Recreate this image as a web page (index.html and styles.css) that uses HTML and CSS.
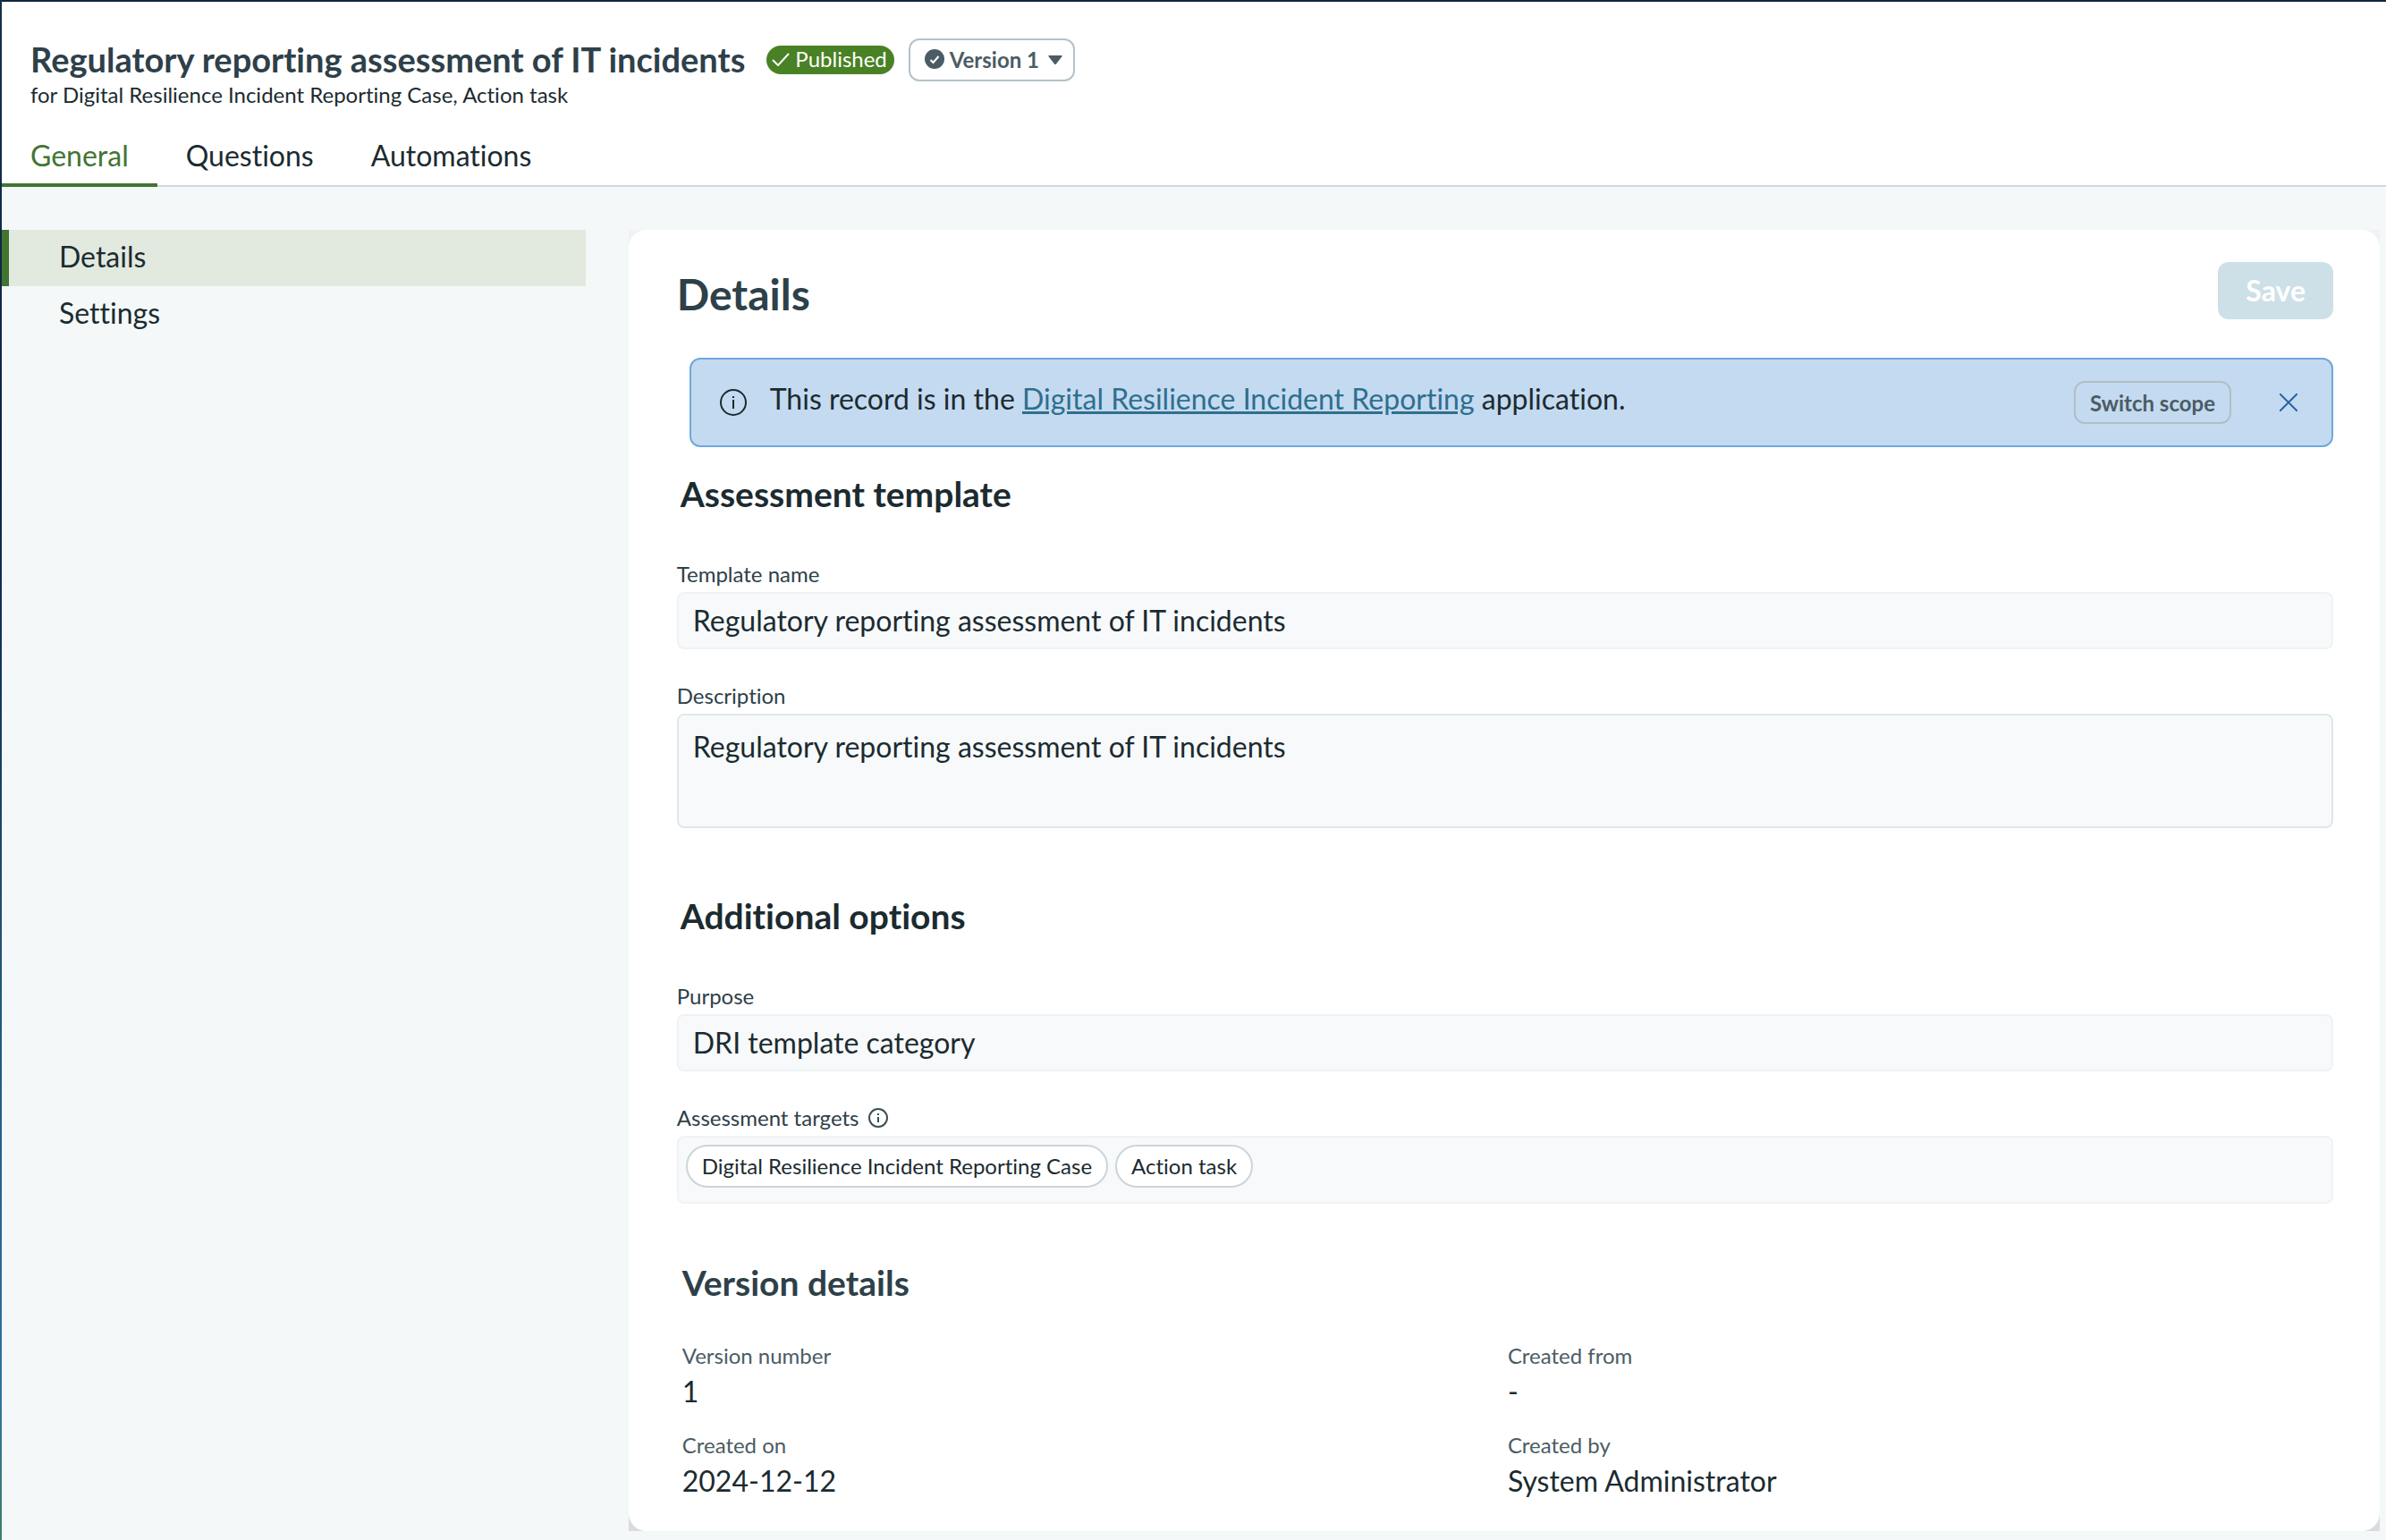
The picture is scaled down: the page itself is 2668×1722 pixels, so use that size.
FILE: index.html
```html
<!DOCTYPE html>
<html lang="en">
<head>
  <meta charset="utf-8">
  <title>Regulatory reporting assessment of IT incidents</title>
  <link rel="stylesheet" href="styles.css">
</head>
<body>

  <div class="page">
    <!-- Record header -->
    <header class="header">
      <div class="title-row">
        <h1>Regulatory reporting assessment of IT incidents</h1>
        <span class="badge">
          <svg width="20" height="16" viewBox="0 0 20 16" fill="none" stroke="currentColor" stroke-width="2"><path d="M1 9l6 6L19 2"/></svg>
          Published
        </span>
        <button class="btn version-btn" type="button">
          <svg width="22" height="22" viewBox="0 0 22 22"><circle cx="11" cy="11" r="11" fill="#4b5c65"/><path d="M6.500 12l3 3 6-7" fill="none" stroke="#fff" stroke-width="2"/></svg>
          Version 1
          <svg class="caret" width="16" height="10" viewBox="0 0 16 10"><path d="M1 0h14q1 0 .6 1L9 9.500q-1 1-2 0L.4 1Q0 0 1 0z" fill="#4b5c65"/></svg>
        </button>
      </div>
      <p class="subtitle">for Digital Resilience Incident Reporting Case, Action task</p>
      <nav class="tabs">
        <a class="tab active" href="#general">General</a>
        <a class="tab" href="#questions">Questions</a>
        <a class="tab" href="#automations">Automations</a>
      </nav>
    </header>

    <div class="content">
      <nav class="sidebar">
        <a class="side-item active" href="#details">Details</a>
        <a class="side-item" href="#settings">Settings</a>
      </nav>

      <div class="card-wrap">
        <main class="card">
          <div class="card-head">
            <h2>Details</h2>
            <button class="save-btn" type="button" disabled>Save</button>
          </div>

          <!-- Scope message -->
          <div class="banner">
            <svg width="30" height="30" viewBox="0 0 30 30" fill="none" stroke="#1b2b30" stroke-width="2"><circle cx="15" cy="15" r="14"/><path d="M15 12v10M15 8v2"/></svg>
            <p>This record is in the <a href="#app">Digital Resilience Incident Reporting</a> application.</p>
            <button class="btn scope-btn" type="button">Switch scope</button>
            <button class="close-btn" type="button" aria-label="Close">
              <svg width="20" height="20" viewBox="0 0 20 20" stroke="#2a64a4" stroke-width="2"><path d="M0 0l20 20M20 0L0 20"/></svg>
            </button>
          </div>

          <h3>Assessment template</h3>
          <div class="field">
            <label for="name">Template name</label>
            <input id="name" type="text" value="Regulatory reporting assessment of IT incidents" readonly>
          </div>
          <div class="field">
            <label for="description">Description</label>
            <textarea id="description" readonly>Regulatory reporting assessment of IT incidents</textarea>
          </div>

          <h3 class="options-title">Additional options</h3>
          <div class="field">
            <label for="purpose">Purpose</label>
            <input id="purpose" type="text" value="DRI template category" readonly>
          </div>
          <div class="field">
            <div class="field-label" id="targets">Assessment targets
              <svg width="22" height="22" viewBox="0 0 22 22" fill="none" stroke="#3d4f57" stroke-width="2"><circle cx="11" cy="11" r="10"/><path d="M11 10v6M11 6v2"/></svg>
            </div>
            <div class="chips" role="group" aria-labelledby="targets">
              <span class="chip">Digital Resilience Incident Reporting Case</span>
              <span class="chip">Action task</span>
            </div>
          </div>

          <h3 class="version-title">Version details</h3>
          <dl class="version-grid">
            <div><dt>Version number</dt><dd>1</dd></div>
            <div><dt>Created from</dt><dd>-</dd></div>
            <div><dt>Created on</dt><dd>2024-12-12</dd></div>
            <div><dt>Created by</dt><dd>System Administrator</dd></div>
          </dl>
        </main>
      </div>
    </div>
  </div>

</body>
</html>
```
FILE: styles.css
```css
* {
  box-sizing: border-box;
}
body {
  margin: 0;
  font-family: Lato, "Liberation Sans", sans-serif;
  font-size: 32px;
  line-height: 40px;
  font-variant-ligatures: none;
  color: #1b2b30;
  background: linear-gradient(#16304a, #0c2440 30%, #15385a 45%, #1f5478 62%, #2f72a0 90%, #3a8268);
}
h1, h2, h3, p, dl, dd {
  margin: 0;
}
button, input, textarea {
  font-family: inherit;
  font-variant-ligatures: none;
  color: inherit;
}
.page {
  margin-left: 2px;
  border-top: 2px solid #12293f;
  background: #f4f8f9;
  min-height: 100vh;
}
/* header */
.header {
  background: #fff;
  padding-top: 40px;
  border-bottom: 2px solid #cfd8dd;
}
.title-row {
  display: flex;
  align-items: center;
  padding-left: 32px;
  height: 50px;
}
h1 {
  padding-bottom: 2px;
  font-size: 38px;
  line-height: 48px;
  color: #2e4049;
}
.badge {
  display: flex;
  align-items: center;
  gap: 6px;
  height: 32px;
  margin-left: 24px;
  padding: 0 8px 2px 6px;
  border-radius: 16px;
  background: #498125;
  color: #fff;
  font-size: 24px;
}
.btn {
  display: flex;
  align-items: center;
  height: 48px;
  padding: 0 16px;
  border: 2px solid #b4c2c9;
  border-radius: 12px;
  background: transparent;
  color: #4b5c65;
  font-size: 24px;
  font-weight: bold;
}
.version-btn {
  gap: 6px;
  margin-left: 16px;
  padding: 0 12px 2px 16px;
}
.caret {
  margin: 2px 0 0 4px;
}
.subtitle {
  padding-left: 32px;
  font-size: 24px;
  line-height: 28px;
}
.tabs {
  display: flex;
  margin: 22px 0 -2px;
}
.tab {
  height: 67px;
  padding: 12px 32px 0;
  color: inherit;
  text-decoration: none;
}
.tab.active {
  color: #427532;
  border-bottom: 4px solid #427532;
}
/* body of the page */
.content {
  display: grid;
  grid-template-columns: 1fr 3fr;
  gap: 48px;
  padding: 48px 7px 10px 0;
}
.side-item {
  display: block;
  padding: 10px 0 13px 64px;
  color: inherit;
  text-decoration: none;
}
.side-item.active {
  border-left: 8px solid #427532;
  padding-left: 56px;
  background: #e2e9df;
}
.card-wrap {
  background: linear-gradient(#eff3f4, #d9dcde);
}
.card {
  padding: 36px 52px 36px 54px;
  border-radius: 20px;
  background: #fff;
}
.card-head {
  display: flex;
  justify-content: space-between;
  align-items: flex-start;
}
h2 {
  padding-top: 8px;
  font-size: 48px;
  line-height: 56px;
  color: #2e4049;
}
.save-btn {
  height: 64px;
  padding: 0 31px 2px;
  border: none;
  border-radius: 12px;
  background: #cde0e7;
  color: #fff;
  font-size: 32px;
  font-weight: bold;
}
.banner {
  display: flex;
  align-items: center;
  height: 100px;
  margin: 43px 0 0 14px;
  padding: 0 28px 0 32px;
  border: 2px solid #6fa8dc;
  border-radius: 12px;
  background: #c4daf0;
}
.banner p {
  flex: 1;
  margin-left: 26px;
  padding-bottom: 8px;
}
.banner a {
  color: #2e6f8e;
}
.scope-btn {
  border-color: #b0bfc6;
}
.close-btn {
  display: flex;
  margin-left: 44px;
  padding: 10px;
  border: none;
  background: none;
}
h3 {
  margin: 28px 0 50px 4px;
  font-size: 39px;
  line-height: 48px;
}
.field {
  margin-bottom: 36px;
}
.field label, .field-label {
  display: flex;
  align-items: center;
  gap: 10px;
  height: 36px;
  padding-bottom: 4px;
  font-size: 24px;
  color: #2e4049;
}
.field input, .field textarea, .chips {
  display: block;
  width: 100%;
  height: 64px;
  padding: 0 16px 2px;
  border: 2px solid #eff3f5;
  border-radius: 8px;
  background: #f7f9fb;
  font-size: 32px;
}
.field textarea {
  height: 128px;
  padding: 15px 16px;
  border-color: #dfe8ea;
  line-height: 40px;
  resize: none;
}
.options-title {
  margin-top: 74px;
}
.field .chips {
  display: flex;
  align-items: flex-start;
  gap: 8px;
  height: 76px;
  padding: 8px;
}
.chip {
  height: 48px;
  padding: 0 16px;
  border: 2px solid #cbd5da;
  border-radius: 24px;
  background: #fff;
  font-size: 24px;
  line-height: 44px;
}
.version-title {
  margin: 64px 0 38px 6px;
  color: #2e4049;
}
.version-grid {
  display: grid;
  grid-template-columns: 1fr 1fr;
  row-gap: 20px;
  margin-left: 6px;
}
dt {
  font-size: 24px;
  line-height: 40px;
  color: #4b5c65;
}
```
